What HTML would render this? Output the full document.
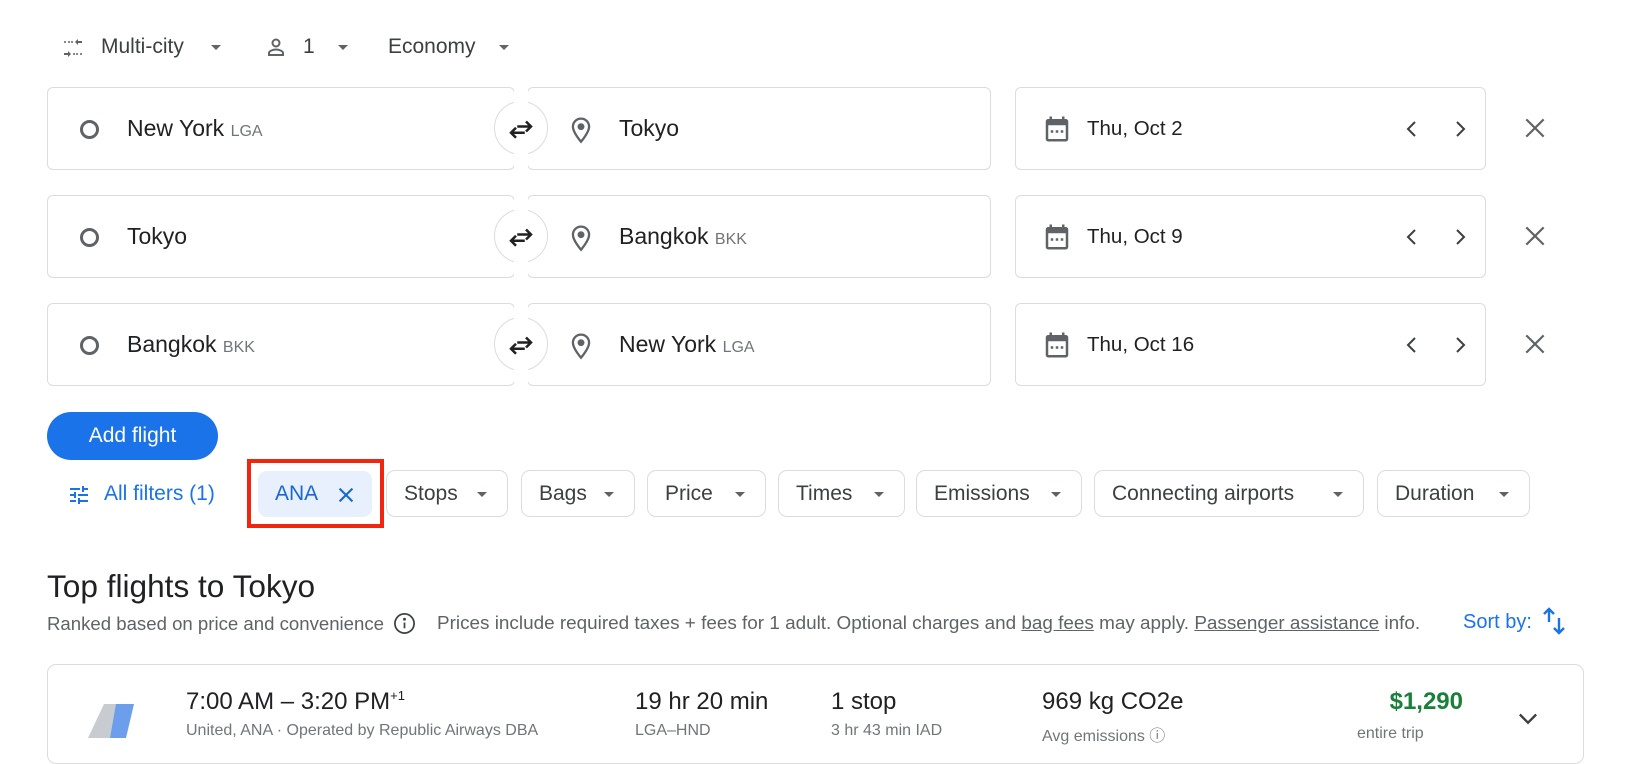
<!DOCTYPE html>
<html><head><meta charset="utf-8"><style>
*{box-sizing:border-box;margin:0;padding:0}
body{width:1628px;height:734px;overflow:hidden;background:#fff;font-family:"Liberation Sans",Arial,sans-serif;color:#3c4043;position:relative}
.a{position:absolute}
.box{position:absolute;border:1px solid #dadce0;border-radius:6px;background:#fff}
.t{position:absolute;white-space:nowrap}
.code{font-size:16px;color:#70757a}
.chip{position:absolute;top:470px;height:47px;border:1px solid #dadce0;border-radius:9px;font-size:21px;color:#3c4043;display:flex;align-items:center;padding-left:17px}
.tri{display:inline-block;width:0;height:0;border-left:5px solid transparent;border-right:5px solid transparent;border-top:5px solid #5f6368;position:absolute;right:20px;top:21px}
.swap{position:absolute;left:494px;width:54px;height:54px;border:1px solid #dadce0;border-radius:50%;background:#fff}
</style></head><body>

<svg class="a" style="left:61px;top:36px" width="24" height="24" viewBox="0 0 24 24" fill="#5f6368"><path d="M14 6l3-3v2h4v2h-4v2zM10 18l-3 3v-2H3v-2h4v-2z"/><circle cx="4" cy="6" r="1"/><circle cx="8" cy="6" r="1"/><circle cx="11" cy="6" r="1"/><circle cx="13" cy="18" r="1"/><circle cx="16" cy="18" r="1"/><circle cx="20" cy="18" r="1"/></svg>
<div class="t" style="left:101px;top:35px;font-size:21px">Multi-city</div>
<div class="a" style="left:211px;top:45px;border-left:5px solid transparent;border-right:5px solid transparent;border-top:5px solid #5f6368"></div>
<svg class="a" style="left:264px;top:35px" width="24" height="24" viewBox="0 0 24 24" fill="none" stroke="#5f6368" stroke-width="2"><circle cx="12" cy="8" r="3.5"/><path d="M5 20v-2c0-2 4-3.5 7-3.5s7 1.5 7 3.5v2z"/></svg>
<div class="t" style="left:303px;top:35px;font-size:21px">1</div>
<div class="a" style="left:338px;top:45px;border-left:5px solid transparent;border-right:5px solid transparent;border-top:5px solid #5f6368"></div>
<div class="t" style="left:388px;top:35px;font-size:21px">Economy</div>
<div class="a" style="left:499px;top:45px;border-left:5px solid transparent;border-right:5px solid transparent;border-top:5px solid #5f6368"></div>

<div id="rows"></div>
<script>
const rows=[[87,'New York','LGA','Tokyo','','Thu, Oct 2'],[195,'Tokyo','','Bangkok','BKK','Thu, Oct 9'],[303,'Bangkok','BKK','New York','LGA','Thu, Oct 16']];
let h='';
for(const [y,o,oc,d,dc,dt] of rows){
h+=`<div class="box" style="left:47px;top:${y}px;width:468px;height:83px"></div>
<div class="box" style="left:527px;top:${y}px;width:464px;height:83px"></div>
<div class="swap" style="top:${y+14}px"></div>
<div class="a" style="left:514px;top:${y}px;width:14px;height:83px;background:#fff"></div>
<svg class="a" style="left:505px;top:${y+27}px" width="32" height="30" viewBox="0 0 24 24" fill="none" stroke="#202124" stroke-width="2"><path d="M9 10h11M16 6l4 4-4 4M15 15H4M8 11l-4 4 4 4"/></svg>
<div class="a" style="left:80px;top:${y+33}px;width:19px;height:19px;border:3.5px solid #5f6368;border-radius:50%"></div>
<div class="t" style="left:127px;top:${y+28}px;font-size:23px;color:#202124">${o} <span class="code">${oc}</span></div>
<svg class="a" style="left:567px;top:${y+27}px" width="28" height="30" viewBox="0 0 24 26" fill="none" stroke="#5f6368" stroke-width="2"><path d="M12 24s-7-8-7-13a7 7 0 0 1 14 0c0 5-7 13-7 13z"/><circle cx="12" cy="11" r="2" fill="#5f6368"/></svg>
<div class="t" style="left:619px;top:${y+28}px;font-size:23px;color:#202124">${d} <span class="code">${dc}</span></div>
<div class="box" style="left:1015px;top:${y}px;width:471px;height:83px"></div>
<svg class="a" style="left:1042px;top:${y+27}px" width="30" height="30" viewBox="0 0 24 24" fill="#5f6368"><path d="M19 4h-1V2h-2v2H8V2H6v2H5a2 2 0 0 0-2 2v14a2 2 0 0 0 2 2h14a2 2 0 0 0 2-2V6a2 2 0 0 0-2-2zm0 16H5V9h14z"/><rect x="7" y="13" width="2" height="2"/><rect x="11" y="13" width="2" height="2"/><rect x="15" y="13" width="2" height="2"/></svg>
<div class="t" style="left:1087px;top:${y+30}px;font-size:20.5px;color:#202124">${dt}</div>
<svg class="a" style="left:1400px;top:${y+30}px" width="24" height="24" viewBox="0 0 24 24" fill="none" stroke="#3c4043" stroke-width="2"><path d="M15 5l-7 7 7 7"/></svg>
<svg class="a" style="left:1448px;top:${y+30}px" width="24" height="24" viewBox="0 0 24 24" fill="none" stroke="#3c4043" stroke-width="2"><path d="M9 5l7 7-7 7"/></svg>
<svg class="a" style="left:1522px;top:${y+28}px" width="26" height="26" viewBox="0 0 24 24" fill="none" stroke="#5f6368" stroke-width="2"><path d="M4 4l16 16M20 4L4 20"/></svg>`;
}
document.getElementById('rows').innerHTML=h;
</script>

<div class="a" style="left:47px;top:412px;width:171px;height:48px;border-radius:24px;background:#1a73e8;color:#fff;font-size:21px;display:flex;align-items:center;justify-content:center">Add flight</div>

<svg class="a" style="left:67px;top:483px" width="24" height="24" viewBox="0 0 24 24" fill="#1a73e8"><path d="M3 17v2h6v-2zM3 5v2h10V5zm10 16v-2h8v-2h-8v-2h-2v6zM7 9v2H3v2h4v2h2V9zm14 4v-2H11v2zm-6-4h2V7h4V5h-4V3h-2z"/></svg>
<div class="t" style="left:104px;top:482px;font-size:21px;color:#1a73e8">All filters (1)</div>
<div class="a" style="left:247px;top:459px;width:137px;height:69px;border:4px solid #f1260f"></div>
<div class="a" style="left:258px;top:471px;width:114px;height:46px;background:#e8f0fe;border-radius:9px"></div>
<div class="t" style="left:275px;top:482px;font-size:21px;color:#1967d2">ANA</div>
<svg class="a" style="left:335px;top:484px" width="22" height="22" viewBox="0 0 24 24" fill="none" stroke="#1967d2" stroke-width="2.3"><path d="M5 5l14 14M19 5L5 19"/></svg>
<div class="chip" style="left:386px;width:122px">Stops<span class="tri"></span></div>
<div class="chip" style="left:521px;width:114px">Bags<span class="tri"></span></div>
<div class="chip" style="left:647px;width:119px">Price<span class="tri"></span></div>
<div class="chip" style="left:778px;width:127px">Times<span class="tri"></span></div>
<div class="chip" style="left:916px;width:166px">Emissions<span class="tri"></span></div>
<div class="chip" style="left:1094px;width:270px">Connecting airports<span class="tri"></span></div>
<div class="chip" style="left:1377px;width:153px">Duration<span class="tri"></span></div>

<div class="t" style="left:47px;top:568px;font-size:31.6px;color:#202124">Top flights to Tokyo</div>
<div class="t" style="left:47px;top:613px;font-size:18.6px;color:#5f6368">Ranked based on price and convenience</div>
<svg class="a" style="left:393px;top:612px" width="23" height="23" viewBox="0 0 24 24" fill="none" stroke="#3c4043" stroke-width="1.8"><circle cx="12" cy="12" r="10"/><path d="M12 11v6"/><circle cx="12" cy="7.5" r="0.6" fill="#3c4043"/></svg>
<div class="t" style="left:437px;top:613px;font-size:18.9px;color:#5f6368">Prices include required taxes + fees for 1 adult. Optional charges and <u>bag fees</u> may apply. <u>Passenger assistance</u> info.</div>
<div class="t" style="left:1463px;top:611px;font-size:20px;color:#1a73e8">Sort by:</div>
<svg class="a" style="left:1541px;top:606px" width="26" height="30" viewBox="0 0 26 30" fill="none" stroke="#1a73e8" stroke-width="2.4"><path d="M8 16V3M3 8l5-5 5 5M18 12v15M13 22l5 5 5-5"/></svg>

<div class="a" style="left:47px;top:664px;width:1537px;height:100px;border:1px solid #dadce0;border-radius:9px"></div>
<svg class="a" style="left:84px;top:698px" width="56" height="40" viewBox="0 0 56 40"><path d="M20 6h16L26 40H4z" fill="#c8cbd0"/><path d="M32 6h18L42 40H26z" fill="#6d9eeb"/></svg>
<div class="t" style="left:186px;top:688px;font-size:24px;color:#202124">7:00 AM – 3:20 PM<sup style="font-size:13px">+1</sup></div>
<div class="t" style="left:186px;top:722px;font-size:16px;color:#70757a">United, ANA · Operated by Republic Airways DBA</div>
<div class="t" style="left:635px;top:688px;font-size:24px;color:#202124">19 hr 20 min</div>
<div class="t" style="left:635px;top:722px;font-size:16px;color:#70757a">LGA–HND</div>
<div class="t" style="left:831px;top:688px;font-size:24px;color:#202124">1 stop</div>
<div class="t" style="left:831px;top:722px;font-size:16px;color:#70757a">3 hr 43 min IAD</div>
<div class="t" style="left:1042px;top:688px;font-size:24px;color:#202124">969 kg CO2e</div>
<div class="t" style="left:1042px;top:722px;font-size:16px;color:#70757a">Avg emissions ⓘ</div>
<div class="t" style="left:1360px;top:688px;width:103px;text-align:right;font-size:24px;color:#188038;font-weight:bold">$1,290</div>
<div class="t" style="left:1357px;top:725px;font-size:16px;color:#70757a">entire trip</div>
<svg class="a" style="left:1514px;top:704px" width="28" height="28" viewBox="0 0 24 24" fill="none" stroke="#3c4043" stroke-width="2"><path d="M5 9l7 7 7-7"/></svg>
</body></html>
